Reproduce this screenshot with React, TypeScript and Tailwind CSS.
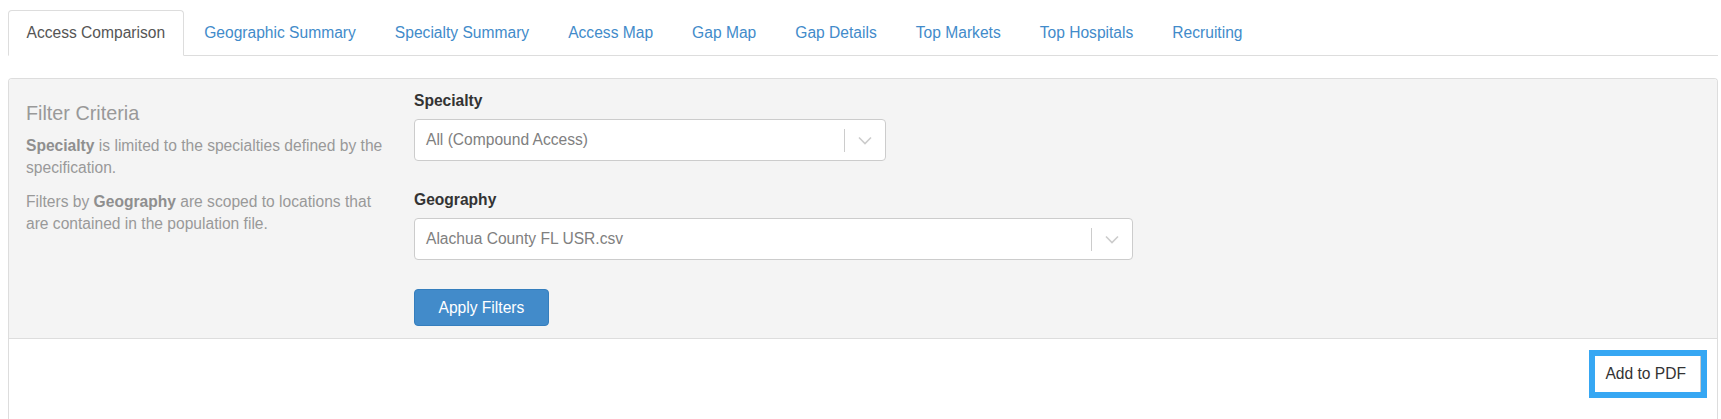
import React from "react";

const tabs = [
  "Access Comparison",
  "Geographic Summary",
  "Specialty Summary",
  "Access Map",
  "Gap Map",
  "Gap Details",
  "Top Markets",
  "Top Hospitals",
  "Recruiting",
];

function Chevron() {
  return (
    <svg width="14" height="9" viewBox="0 0 14 9" fill="none">
      <polyline points="1,1.5 7,7.5 13,1.5" stroke="#cccccc" strokeWidth="1.6" />
    </svg>
  );
}

function SelectBox({ value, width }: { value: string; width: string }) {
  return (
    <div className={`${width} h-[42px] flex items-center bg-white border border-[#ccc] rounded-[4px] pl-[11px]`}>
      <span className="flex-1 text-[#808080]">{value}</span>
      <span className="w-px h-[23px] bg-[#ccc]" />
      <span className="w-[40px] flex items-center justify-center">
        <Chevron />
      </span>
    </div>
  );
}

export default function App() {
  return (
    <div className="min-h-screen bg-white pl-[8px] pr-[3px] pt-[10px] font-['Liberation_Sans',Arial,sans-serif] text-[15.6px] leading-[22px] text-[#333]">
      {/* tabs */}
      <ul className="flex border-b border-[#ddd]">
        {tabs.map((t, i) => (
          <li key={t} className="-mb-px mr-[2px]">
            {i === 0 ? (
              <span className="block px-[17.5px] py-[11px] bg-white border border-[#ddd] border-b-transparent rounded-t-[4px] text-[#555]">
                {t}
              </span>
            ) : (
              <span className="block px-[17.5px] py-[11px] border border-transparent text-[#428bca]">{t}</span>
            )}
          </li>
        ))}
      </ul>

      {/* panel */}
      <div className="mt-[22px] border border-b-0 border-[#ddd] rounded-t-[4px] overflow-hidden">
        <div className="flex bg-[#f4f4f4] border-b border-[#ddd]">
          <div className="w-[405px] shrink-0 pl-[17px] pr-[20px] pt-[23px] text-[#999]">
            <h3 className="text-[19.8px] leading-[22px] mb-[11px]">Filter Criteria</h3>
            <p className="mb-[12px]">
              <b className="text-[#8f8f8f]">Specialty</b> is limited to the specialties defined by the specification.
            </p>
            <p>
              Filters by <b className="text-[#8f8f8f]">Geography</b> are scoped to locations that are contained in the
              population file.
            </p>
          </div>

          <div className="flex-1 pt-[11px] pb-[12px]">
            <div className="font-bold mb-[7px]">Specialty</div>
            <SelectBox value="All (Compound Access)" width="w-[472px]" />

            <div className="font-bold mt-[28px] mb-[7px]">Geography</div>
            <SelectBox value="Alachua County FL USR.csv" width="w-[719px]" />

            <button className="mt-[29px] h-[37px] px-[23.5px] bg-[#428bca] border border-[#357ebd] rounded-[4px] text-white">
              Apply Filters
            </button>
          </div>
        </div>

        <div className="flex justify-end bg-white pt-[11px] pr-[10px] pb-[40px]">
          <div className="border-[6px] border-[#36a7f3]">
            <button className="h-[36px] pl-[10px] pr-[14px] bg-white border-r border-[#ccc] text-[#333]">
              Add to PDF
            </button>
          </div>
        </div>
      </div>
    </div>
  );
}
